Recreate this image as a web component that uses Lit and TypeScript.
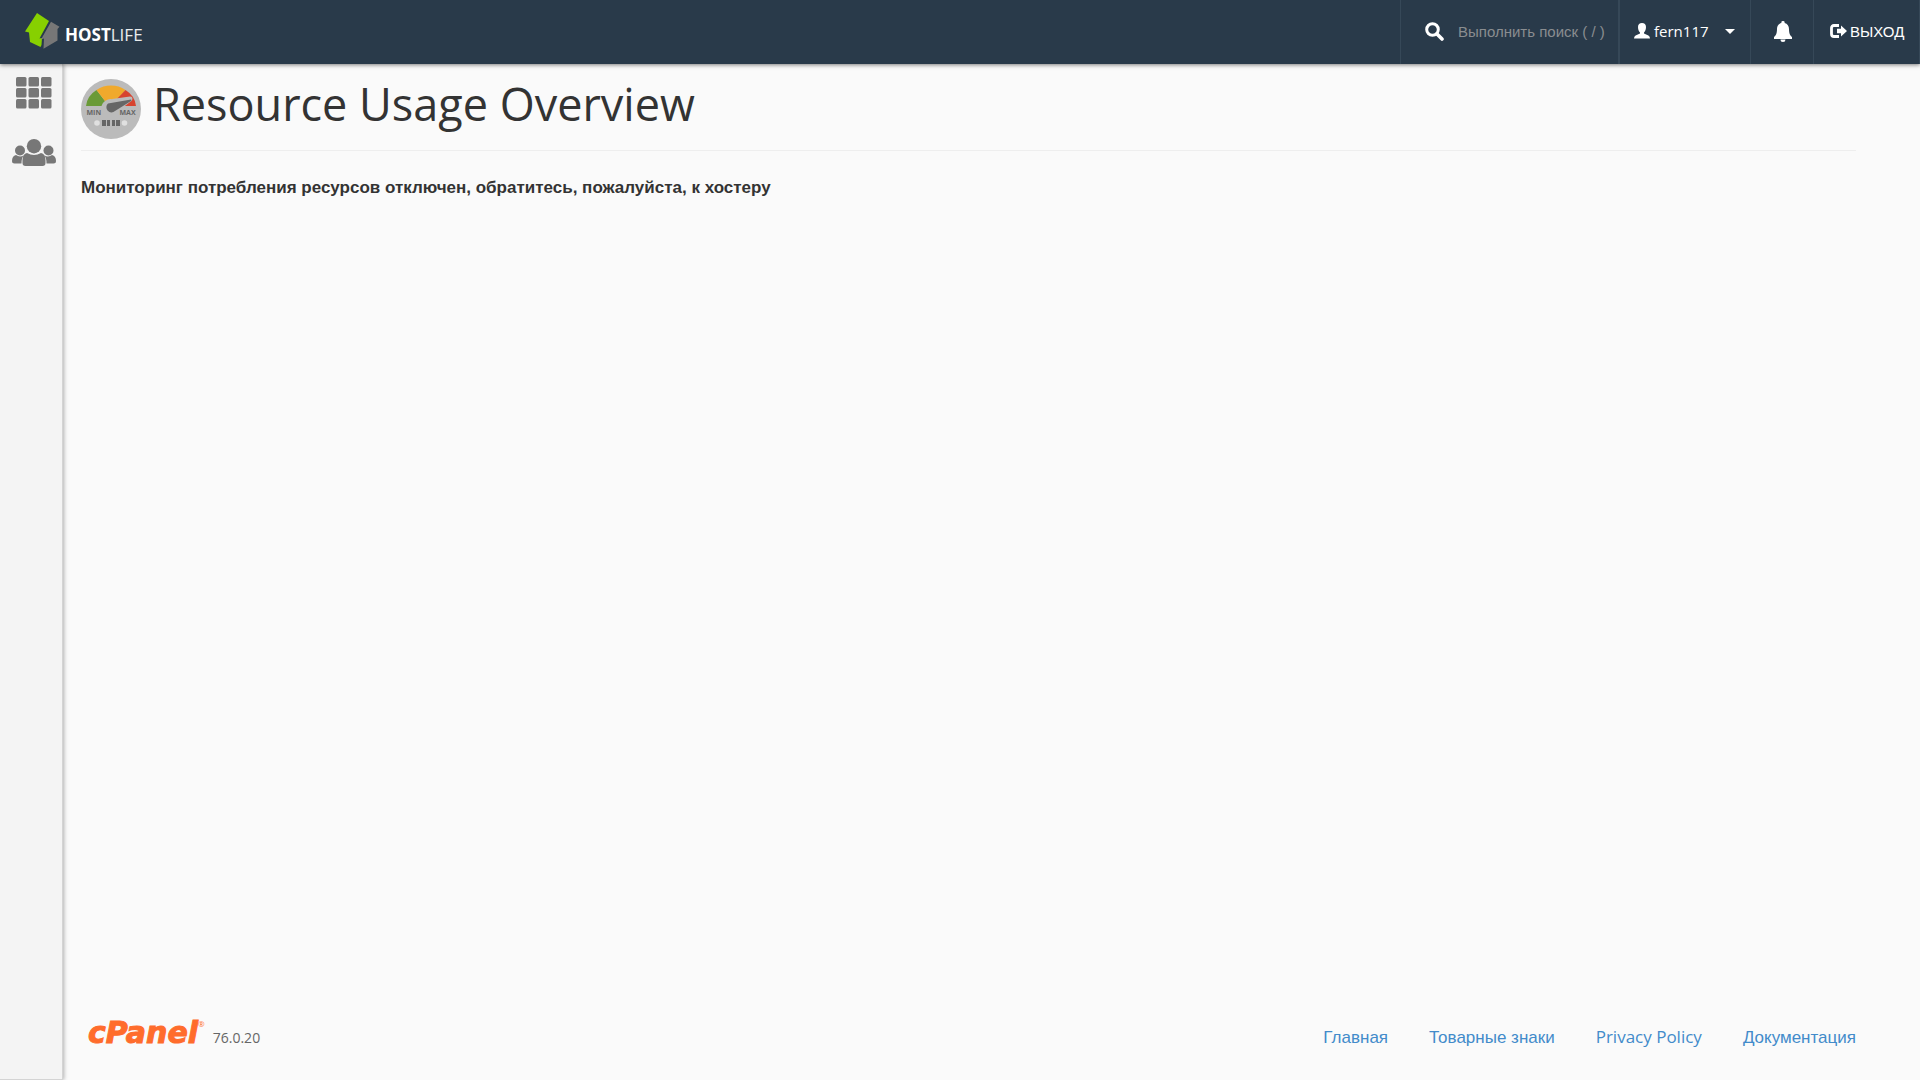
import { LitElement, html, css, svg } from "lit";
import { customElement } from "lit/decorators.js";

const apps = [0, 1, 2].flatMap((r) => [0, 1, 2].map((c) => ({ x: c * 12.5, y: r * 11 })));

@customElement("app-root")
export class AppRoot extends LitElement {
  static styles = css`
    :host {
      display: flex;
      flex-direction: column;
      min-height: 100vh;
      background: #fafafa;
      color: #333;
      font-family: "Open Sans", "Liberation Sans", sans-serif;
    }
    * { box-sizing: border-box; }
    svg { display: block; flex: none; }
    a { text-decoration: none; }
    .ru { font-family: "Liberation Sans", Arial, sans-serif; }
    .top {
      position: relative;
      z-index: 2;
      display: flex;
      justify-content: space-between;
      height: 64px;
      background: #293a4a;
      box-shadow: 0 1px 4px rgba(0, 0, 0, 0.5);
      color: #fff;
      font-size: 15px;
    }
    .brand { display: flex; align-items: center; padding-left: 25px; color: #fff; }
    .word { padding: 5px 0 0 5px; font: 400 17px "Open Sans", sans-serif; color: #e9ecee; }
    .word b { font-weight: 700; color: #fff; }
    .tools { display: flex; }
    .tool {
      display: flex;
      align-items: center;
      padding: 0 0 2px;
      border: 0;
      border-left: 1px solid #364858;
      background: none;
      color: #fff;
      font: inherit;
    }
    .search { width: 218px; gap: 14px; padding-left: 24px; }
    .search input {
      flex: 1;
      min-width: 0;
      padding: 0;
      border: 0;
      outline: 0;
      background: none;
      color: #fff;
      font-size: 15px;
    }
    .search input::placeholder { color: #8a8d90; opacity: 1; }
    .user { width: 132px; padding-right: 15px; padding-left: 14px; gap: 4px; border-left-width: 2px; }
    .user .caret { margin-left: auto; }
    .bell { width: 63px; justify-content: center; padding-left: 2px; }
    .tool.exit { width: 107px; padding-left: 16px; gap: 3px; border-right: 1px solid #364858; font-family: "Liberation Sans", Arial, sans-serif; }
    .body { display: flex; flex: 1; }
    .side {
      display: flex;
      flex-direction: column;
      align-items: center;
      gap: 30px;
      width: 63px;
      padding: 13px 0 0 6px;
      background: #f4f4f4;
      border-right: 1px solid #d4d4d4;
      border-bottom: 1px solid #d4d4d4;
      box-shadow: 1px 0 4px rgba(0, 0, 0, 0.3);
    }
    .page { display: flex; flex: 1; flex-direction: column; padding: 0 64px 0 18px; }
    .head { display: flex; gap: 12px; height: 87px; padding-top: 15px; border-bottom: 1px solid #eee; }
    h1 { margin: 0; font-size: 45px; line-height: 50px; font-weight: 400; }
    .note { margin: 25px 0 0; font-size: 17px; line-height: 24px; font-weight: 700; }
    .foot {
      display: flex;
      align-items: baseline;
      justify-content: space-between;
      margin-top: auto;
      padding: 0 0 30px 7px;
    }
    .made { display: flex; align-items: baseline; gap: 8px; font-size: 14px; color: #666; }
    .cpanel { font: italic 700 30px/35px "DejaVu Sans", sans-serif; color: #ff6c2c; -webkit-text-stroke: 1px #ff6c2c; }
    .cpanel sup { font: 400 8px/8px "Open Sans", sans-serif; vertical-align: 16px; -webkit-text-stroke: 0; }
    .links { display: flex; align-items: baseline; gap: 41px; font-size: 17px; }
    .links a { color: #428bca; }
  `;

  render() {
    return html`
      <header class="top">
        <a class="brand" href="#" aria-label="HostLife">
          <svg width="35" height="38" viewBox="0 0 35 38">
            <path fill="#87d000" d="M12 0 24 8 14.500 25.500 17 25 16.500 32 15.500 34 5 29 4 19.500 0 18.500Z" />
            <path fill="#777" d="M26 8.700 34.500 13.700 32.500 16V27.500L18.500 35.700 19 25.500 16 26.500Z" />
          </svg>
          <span class="word"><b>HOST</b>LIFE</span>
        </a>
        <div class="tools">
          <label class="tool search">
            <svg width="19" height="19" viewBox="0 0 19 19" fill="none" stroke="#fff">
              <circle cx="7.5" cy="7.5" r="5.8" stroke-width="3" /><path d="m12 12 5 5" stroke-width="3.6" stroke-linecap="round" />
            </svg>
            <input class="ru" type="text" aria-label="Поиск" placeholder="Выполнить поиск ( / )" />
          </label>
          <button class="tool user">
            <svg width="16" height="16" viewBox="0 0 16 16" fill="#fff">
              <path d="M8 0C5.500 0 4 1.500 4 4c0 2.200.8 4.400 2 5.400v1.200L1.600 12.500Q0 13.300 0 15.500h16q0-2.200-1.600-3L10 10.600V9.400c1.200-1 2-3.200 2-5.400C12 1.500 10.500 0 8 0Z" />
            </svg>
            <span>fern117</span>
            <svg class="caret" width="10" height="5" viewBox="0 0 10 5" fill="#fff"><path d="M0 0h10L5 5Z" /></svg>
          </button>
          <button class="tool bell" aria-label="Уведомления">
            <svg width="18" height="21" viewBox="0 0 18 21" fill="#fff">
              <path d="M9 0a1.600 1.600 0 0 1 1.600 1.900C13.500 2.600 15 5 15 8c0 5 1.500 7 3 8v2H0v-2c1.500-1 3-3 3-8 0-3 1.500-5.400 4.400-6.100A1.600 1.600 0 0 1 9 0ZM6.500 18.400h5a2.500 2.500 0 0 1-5 0Z" />
            </svg>
          </button>
          <a class="tool exit" href="#">
            <svg width="17" height="14" viewBox="0 0 17 14">
              <path d="M9 1.500H4Q1.500 1.500 1.500 4v6q0 2.500 2.500 2.500h5" fill="none" stroke="#fff" stroke-width="2.800" />
              <path d="M7 4.700h4V1.500L17 7l-6 5.500V9.300H7Z" fill="#fff" />
            </svg>
            <span>ВЫХОД</span>
          </a>
        </div>
      </header>
      <div class="body">
        <nav class="side">
          <a href="#" aria-label="Приложения">
            <svg width="36" height="32" viewBox="0 0 36 32" fill="#777">
              ${apps.map((a) => svg`<rect x=${a.x} y=${a.y} width="10.500" height="9.500" rx="1.500" />`)}
            </svg>
          </a>
          <a href="#" aria-label="Пользователи">
            <svg width="44" height="27" viewBox="0 0 44 27" fill="#777">
              <circle cx="22" cy="7.200" r="7.200" /><circle cx="8" cy="11.500" r="5" /><circle cx="36.500" cy="11.500" r="5" />
              <path d="M15 14q7 4 14 0 4.500 1 4.500 7v3q0 3-3 3h-17q-3 0-3-3v-3q0-6 4.500-7Z" />
              <path d="M4 16q3.500 2.500 7.500.500Q9.500 19 9.500 24.500H2.500Q0 24.500 0 22q0-5 4-6ZM40 16q-3.500 2.500-7.500.500 2 2.500 2 8h7q2.500 0 2.500-2.500 0-5-4-6Z" />
            </svg>
          </a>
        </nav>
        <main class="page">
          <div class="head">
            <svg width="60" height="60" viewBox="0 0 60 60">
              <circle cx="30" cy="30" r="30" fill="#bbb" />
              <path d="M5 27A25 22 0 0 1 15.500 11L24 22q-3 2-3.500 5Z" fill="#6a9a37" />
              <path d="M15.500 11a25 24 0 0 1 29 0L35 22q-5-4-11 0Z" fill="#f0a92c" />
              <path d="M44.500 11A25 22 0 0 1 55 27H39L34 22Z" fill="#d7432f" />
              <path d="M31 20 49 17.500q3.500 0 2 4L36 33" fill="#bbb" />
              <path d="M27 24.500 50 20.500q1 1 0 1.500L34 32a5 5 0 1 1-7-7.500Z" fill="#666" />
              <text x="5.500" y="36" font-family="Open Sans" font-size="7" font-weight="700" fill="#666">MIN</text>
              <text x="38.500" y="36" font-family="Open Sans" font-size="7" font-weight="700" fill="#666">MAX</text>
              <circle cx="16" cy="44" r="2.800" fill="#e0e0e0" /><circle cx="43.500" cy="44" r="2.800" fill="#e0e0e0" />
              <path d="M21 41h4v6h-4zM26 41h3v6h-3zM31 41h3v6h-3zM35 41h4v6h-4z" fill="#666" />
            </svg>
            <h1>Resource Usage Overview</h1>
          </div>
          <p class="note ru">Мониторинг потребления ресурсов отключен, обратитесь, пожалуйста, к хостеру</p>
          <footer class="foot">
            <div class="made"><span class="cpanel">cPanel<sup>®</sup></span><span>76.0.20</span></div>
            <nav class="links">
              <a class="ru" href="#">Главная</a>
              <a class="ru" href="#">Товарные знаки</a>
              <a href="#">Privacy Policy</a>
              <a class="ru" href="#">Документация</a>
            </nav>
          </footer>
        </main>
      </div>
    `;
  }
}
